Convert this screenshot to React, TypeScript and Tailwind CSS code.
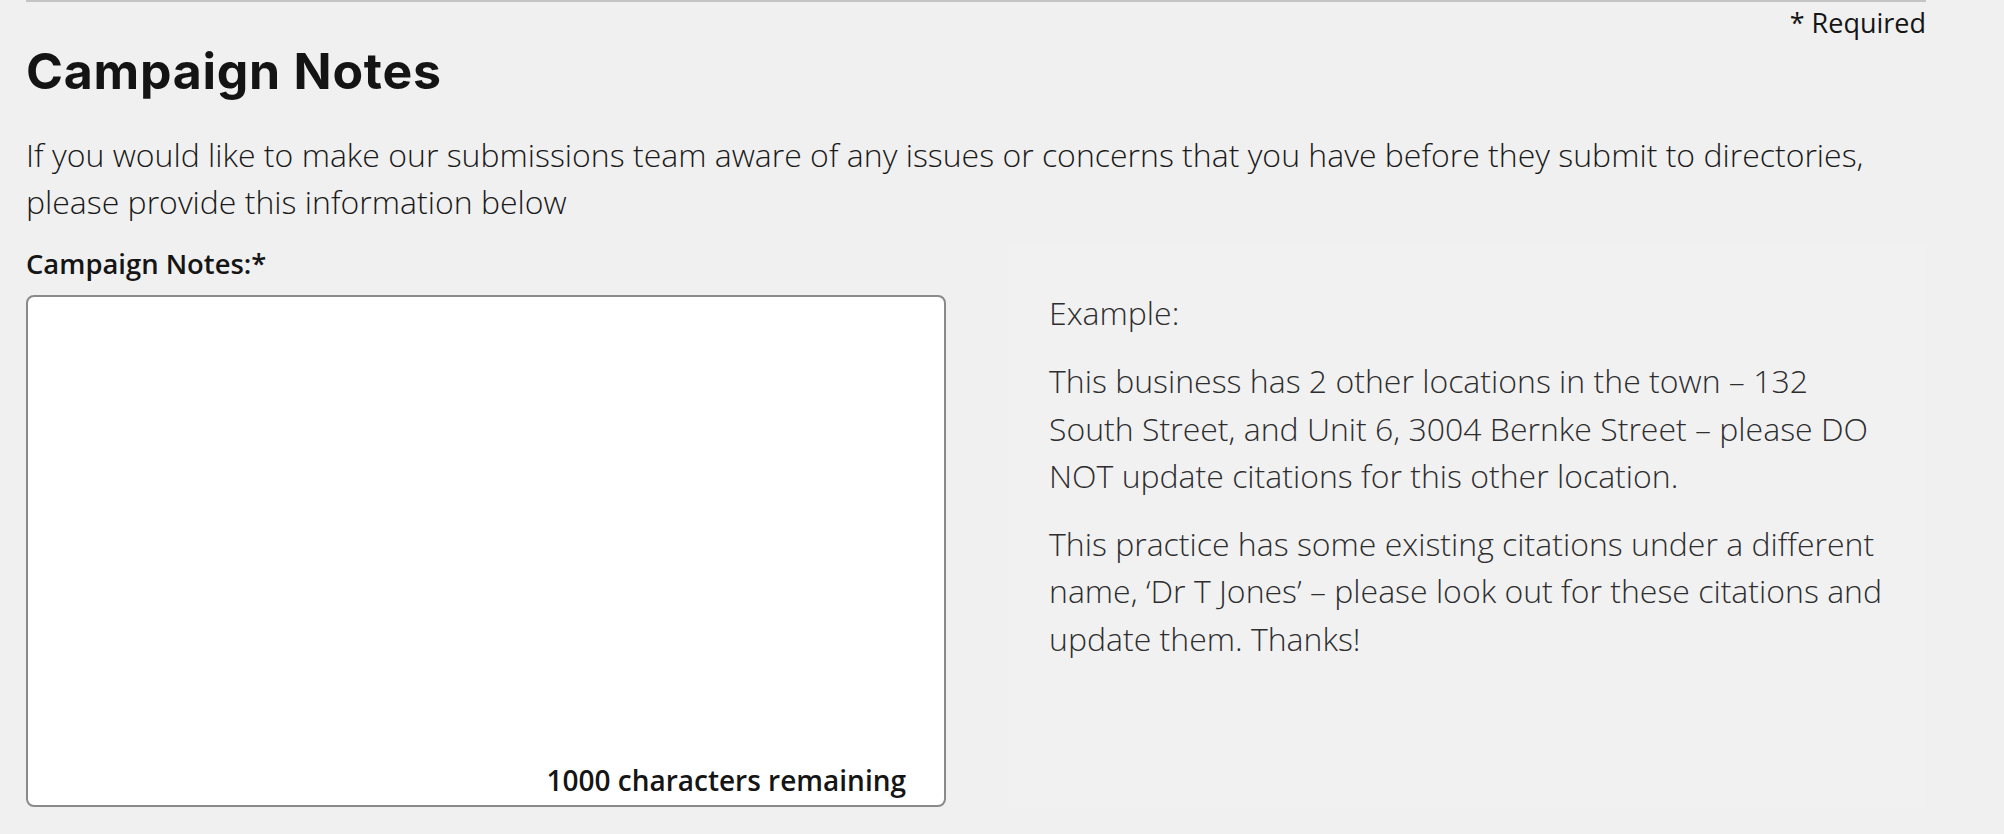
import React from 'react';

const examples = [
  'This business has 2 other locations in the town – 132 South Street, and Unit 6, 3004 Bernke Street – please DO NOT update citations for this other location.',
  'This practice has some existing citations under a different name, ‘Dr T Jones’ – please look out for these citations and update them. Thanks!',
];

const App = () => {
  return (
    <div className="min-h-screen bg-[#f0f0f0] px-[26px] font-['Open_Sans',sans-serif] text-[#161616]">
      <div className="w-[1900px] border-t-2 border-[#c4c4c4]">
        <p className="pt-[2px] text-right text-[27px] leading-[38px]">* Required</p>

        <h2 className="font-['Inter',sans-serif] text-[50px] font-bold leading-[58px] tracking-[0.75px] text-[#141414]">
          Campaign Notes
        </h2>

        <p className="mt-[32px] text-[32px] font-light leading-[46.5px] text-[#1a1a1a]">
          If you would like to make our submissions team aware of any issues or concerns that you have before they submit to
          directories, please provide this information below
        </p>

        <div className="mt-[19px] grid grid-cols-[920px_1fr] gap-[61px]">
          <div>
            <label className="block text-[27.4px] font-semibold leading-[40px] text-[#151515]">Campaign Notes:*</label>
            <div className="relative mt-[11px] h-[512px] rounded-[8px] border-2 border-[#8a8a8a] bg-white">
              <textarea className="h-full w-full resize-none rounded-[8px] bg-transparent p-4 outline-none" />
              <span className="pointer-events-none absolute bottom-[5px] right-[38px] text-[28px] font-semibold leading-[40px] text-[#151515]">
                1000 characters remaining
              </span>
            </div>
          </div>

          <div className="bg-[#f1f1f2] pl-[42px] pr-[36px] pt-[45px] text-[32px] font-light leading-[47.3px] text-[#2e2e2e]">
            <p>Example:</p>
            {examples.map((text) => (
              <p key={text.slice(0, 16)} className="mt-[21px]">
                {text}
              </p>
            ))}
          </div>
        </div>
      </div>
    </div>
  );
};

export default App;
